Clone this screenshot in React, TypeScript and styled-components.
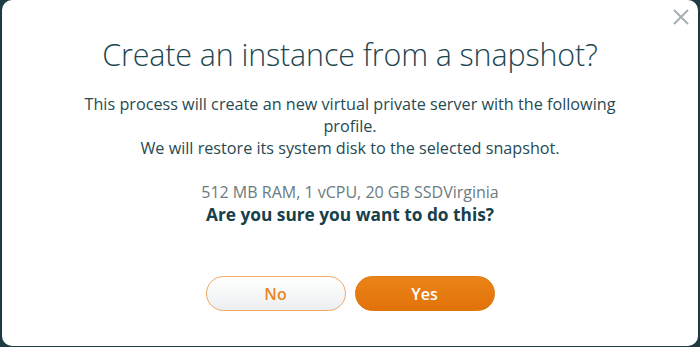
import styled, { createGlobalStyle } from 'styled-components';

const GlobalStyle = createGlobalStyle`
  html, body {
    margin: 0;
    padding: 0;
    background: #1f3b42;
  }
  body {
    font-family: 'Open Sans', 'Noto Sans', sans-serif;
  }
`;

const Page = styled.div`
  width: 700px;
  height: 347px;
  padding: 0 2px 1px 2px;
  box-sizing: border-box;
`;

const Modal = styled.div`
  position: relative;
  height: 100%;
  background: #ffffff;
  border-radius: 10px;
  display: flex;
  flex-direction: column;
  align-items: center;
  padding-top: 35px;
  box-sizing: border-box;
  color: #1d4650;
`;

const CloseButton = styled.button`
  position: absolute;
  top: 6px;
  right: 6px;
  width: 22px;
  height: 22px;
  padding: 0;
  border: none;
  background: transparent;
  cursor: pointer;
  display: flex;
  align-items: center;
  justify-content: center;
`;

const Title = styled.h1`
  margin: 0;
  font-size: 30.4px;
  font-weight: 300;
  line-height: 40px;
  color: #1d4650;
  letter-spacing: -0.1px;
`;

const Message = styled.p`
  margin: 18px 0 0;
  width: 560px;
  text-align: center;
  font-size: 16.2px;
  line-height: 22px;
  color: #264a53;
`;

const Specs = styled.div`
  margin-top: 22px;
  font-size: 16px;
  line-height: 22px;
  color: #6b7b80;
`;

const Question = styled.div`
  font-size: 17.3px;
  font-weight: 700;
  line-height: 24px;
  color: #16404a;
`;

const Actions = styled.div`
  margin-top: 49px;
  display: flex;
  gap: 9px;
`;

const Button = styled.button<{ $primary?: boolean }>`
  width: 140px;
  height: 35px;
  border-radius: 18px;
  font-family: inherit;
  font-size: 16px;
  font-weight: 600;
  cursor: pointer;
  border: 1px solid ${(p) => (p.$primary ? '#e0770f' : '#f0a866')};
  color: ${(p) => (p.$primary ? '#ffffff' : '#e8862a')};
  background: ${(p) =>
    p.$primary
      ? 'linear-gradient(180deg, #ea8418 0%, #e2720a 100%)'
      : 'linear-gradient(180deg, #ffffff 0%, #eceff0 100%)'};
`;

export default function App() {
  return (
    <>
      <GlobalStyle />
      <Page>
        <Modal>
          <CloseButton aria-label="Close">
            <svg width="18" height="18" viewBox="0 0 18 18">
              <path d="M2 2 L16 16 M16 2 L2 16" stroke="#a5b0b2" strokeWidth="2" />
            </svg>
          </CloseButton>
          <Title>Create an instance from a snapshot?</Title>
          <Message>
            This process will create an new virtual private server with the following profile.
            <br />
            We will restore its system disk to the selected snapshot.
          </Message>
          <Specs>512 MB RAM, 1 vCPU, 20 GB SSDVirginia</Specs>
          <Question>Are you sure you want to do this?</Question>
          <Actions>
            <Button>No</Button>
            <Button $primary>Yes</Button>
          </Actions>
        </Modal>
      </Page>
    </>
  );
}
